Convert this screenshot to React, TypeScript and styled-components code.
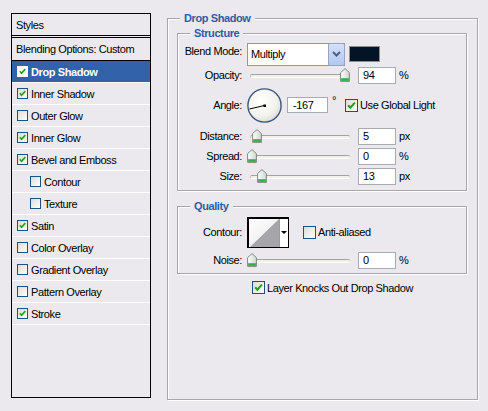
import { createGlobalStyle, styled } from "styled-components";

const GlobalStyle = createGlobalStyle`
  html, body {
    margin: 0;
    background: #ebe9ed;
    font-family: "Liberation Sans", Arial, sans-serif;
    font-size: 11px;
    letter-spacing: -0.4px;
    color: #000;
  }
`;

const Page = styled.div`
  width: 488px;
  height: 411px;
  box-sizing: border-box;
  padding: 12px 0 0 11px;
  display: flex;
  align-items: flex-start;
  gap: 16px;
  overflow: hidden;
`;

/* ---------- left list ---------- */

const StylesPanel = styled.div`
  margin-top: 1px;
  width: 140px;
  height: 385px;
  box-sizing: border-box;
  border: 1px solid #000;
  display: flex;
  flex-direction: column;
`;

const PanelHeader = styled.div`
  height: 24px;
  box-sizing: border-box;
  border-bottom: 3px double #000;
  padding-left: 4px;
  display: flex;
  align-items: center;
`;

const BlendingRow = styled.div`
  height: 23px;
  box-sizing: border-box;
  border-bottom: 1px solid #000;
  padding-left: 4px;
  display: flex;
  align-items: center;
`;

const StyleRow = styled.div<{ $selected?: boolean; $indent?: boolean }>`
  height: 22px;
  box-sizing: border-box;
  border-bottom: 1px solid #fff;
  padding-left: ${(p) => (p.$indent ? 18 : 5)}px;
  display: flex;
  align-items: center;
  gap: 3px;
  background: ${(p) => (p.$selected ? "#3162aa" : "transparent")};
  color: ${(p) => (p.$selected ? "#fff" : "#000")};
  font-weight: ${(p) => (p.$selected ? "bold" : "normal")};
`;

/* ---------- checkbox ---------- */

const Box = styled.span<{ $size: number; $light?: boolean }>`
  width: ${(p) => p.$size}px;
  height: ${(p) => p.$size}px;
  box-sizing: border-box;
  flex-shrink: 0;
  border: 1px solid ${(p) => (p.$light ? "#fff" : "#1c5180")};
  background: ${(p) =>
    p.$light ? "#fff" : "linear-gradient(135deg, #dcdcd7 0%, #f4f4f0 70%, #fff 100%)"};
  display: flex;
  align-items: center;
  justify-content: center;
`;

function Check({
  checked,
  size = 13,
  light,
}: {
  checked?: boolean;
  size?: number;
  light?: boolean;
}) {
  const s = size - 2;
  return (
    <Box $size={size} $light={light}>
      {checked && (
        <svg width={s} height={s} viewBox="0 0 11 11">
          <path
            d="M2.2 5.2 L4.3 7.6 L8.9 2.6"
            fill="none"
            stroke="#21a121"
            strokeWidth="2.1"
          />
        </svg>
      )}
    </Box>
  );
}

/* ---------- group boxes ---------- */

const Group = styled.fieldset`
  margin: 0;
  min-inline-size: 0;
  box-sizing: border-box;
  border: 1px solid #a7a6ab;
  box-shadow: 1px 1px 0 #fff, inset 1px 1px 0 #fff;
  padding: 0 10px 0 9px;
`;

const OuterGroup = styled(Group)`
  width: 311px;
  height: 388px;
  padding-top: 2px;
`;

const InnerGroup = styled(Group)<{ $top?: number; $bottom: number; $pt: number }>`
  margin-top: ${(p) => p.$top ?? 0}px;
  padding: ${(p) => p.$pt}px 0 ${(p) => p.$bottom}px 0;
`;

const Legend = styled.legend<{ $indent?: number }>`
  margin-left: ${(p) => p.$indent ?? 3}px;
  padding: 0 4px;
  line-height: 13px;
  font-weight: bold;
  color: #2d5ca6;
  background: #ebe9ed;
`;

/* ---------- rows and controls ---------- */

const Row = styled.div<{ $h: number; $mt?: number }>`
  height: ${(p) => p.$h}px;
  margin-top: ${(p) => p.$mt ?? 0}px;
  display: flex;
  align-items: center;
`;

const Label = styled.span<{ $raise?: number }>`
  width: 64px;
  flex-shrink: 0;
  margin-right: 5px;
  text-align: right;
  white-space: nowrap;
  padding-bottom: ${(p) => p.$raise ?? 0}px;
`;

const Select = styled.div`
  width: 98px;
  height: 23px;
  box-sizing: border-box;
  border: 1px solid #7f9db9;
  background: #fff;
  display: flex;
  align-items: stretch;
`;

const SelectValue = styled.span`
  flex: 1;
  padding-left: 3px;
  display: flex;
  align-items: center;
`;

const DropButton = styled.span`
  width: 17px;
  box-sizing: border-box;
  margin: -1px -1px -1px 0;
  border: 1px solid #98a4bc;
  border-radius: 2px;
  background: linear-gradient(180deg, #d6e1fa 0%, #c0d1f5 60%, #b3c7ef 100%);
  display: flex;
  align-items: center;
  justify-content: center;
`;

const Swatch = styled.span`
  width: 31px;
  height: 16px;
  box-sizing: border-box;
  margin-left: 4px;
  border: 1px solid #8e8e8e;
  background: #021426;
`;

const SliderBox = styled.div`
  position: relative;
  width: 105px;
  height: 14px;
  flex-shrink: 0;
`;

const Track = styled.div`
  position: absolute;
  left: 3px;
  right: 2px;
  top: 6px;
  height: 4px;
  box-sizing: border-box;
  border-top: 1px solid #a3a39b;
  border-left: 1px solid #c2c2ba;
  border-bottom: 1px solid #fff;
  border-radius: 2px;
  background: #f1f1ea;
`;

const Thumb = styled.svg`
  position: absolute;
  top: 0;
`;

function Slider({ pos }: { pos: number }) {
  return (
    <SliderBox>
      <Track />
      <Thumb width="10" height="14" viewBox="0 0 10 14" style={{ left: pos * 99 }}>
        <defs>
          <linearGradient id="thumbFill" x1="0" y1="0" x2="1" y2="0">
            <stop offset="0" stopColor="#ffffff" />
            <stop offset="1" stopColor="#cfd6cf" />
          </linearGradient>
        </defs>
        <path
          d="M5 0.6 L9.4 4.6 L9.4 13.4 L0.6 13.4 L0.6 4.6 Z"
          fill="url(#thumbFill)"
          stroke="#7b8a80"
        />
        <rect x="1.1" y="10.2" width="7.8" height="2.7" fill="#2fb33f" />
      </Thumb>
    </SliderBox>
  );
}

const NumberField = styled.input<{ $w?: number; $h?: number; $pad?: number }>`
  width: ${(p) => p.$w ?? 38}px;
  height: ${(p) => p.$h ?? 17}px;
  box-sizing: border-box;
  margin: 0;
  flex-shrink: 0;
  border: 1px solid #a5acb2;
  background: #fff;
  padding: 0 0 0 ${(p) => p.$pad ?? 4}px;
  font: inherit;
  letter-spacing: inherit;
  color: #000;
  outline: none;
`;

const Unit = styled.span`
  margin-left: 3px;
`;

const Dial = styled.svg`
  flex-shrink: 0;
`;

const Degree = styled.span`
  width: 13px;
  margin-left: 4px;
  align-self: flex-start;
  padding-top: 10px;
`;

const CheckLabel = styled.label<{ $gap?: number }>`
  display: flex;
  align-items: center;
  gap: ${(p) => p.$gap ?? 2}px;
  white-space: nowrap;
`;

const ContourPicker = styled.div`
  width: 42px;
  height: 31px;
  box-sizing: border-box;
  border: 1px solid #000;
  border-top-width: 2px;
  border-left-width: 2px;
  background: #fff;
  display: flex;
`;

const ContourArrow = styled.span`
  flex: 1;
  border-left: 1px solid #9c9ca0;
  display: flex;
  align-items: center;
  justify-content: center;
  &::after {
    content: "";
    border-left: 3px solid transparent;
    border-right: 3px solid transparent;
    border-top: 3px solid #000;
  }
`;

const Spacer = styled.span<{ $w: number }>`
  width: ${(p) => p.$w}px;
  flex-shrink: 0;
`;

const KnockRow = styled.div`
  margin-top: 6px;
  height: 15px;
  padding-left: 75px;
  display: flex;
  align-items: center;
`;

const styleItems = [
  { name: "Drop Shadow", checked: true, selected: true },
  { name: "Inner Shadow", checked: true },
  { name: "Outer Glow", checked: false },
  { name: "Inner Glow", checked: true },
  { name: "Bevel and Emboss", checked: true },
  { name: "Contour", checked: false, indent: true },
  { name: "Texture", checked: false, indent: true },
  { name: "Satin", checked: true },
  { name: "Color Overlay", checked: false },
  { name: "Gradient Overlay", checked: false },
  { name: "Pattern Overlay", checked: false },
  { name: "Stroke", checked: true },
];

export default function App() {
  const angle = (-167 * Math.PI) / 180;
  const lx = 17.5 + 15.5 * Math.cos(angle);
  const ly = 17.5 - 15.5 * Math.sin(angle);

  return (
    <Page>
      <GlobalStyle />
      <StylesPanel>
        <PanelHeader>Styles</PanelHeader>
        <BlendingRow>Blending Options: Custom</BlendingRow>
        {styleItems.map((item) => (
          <StyleRow key={item.name} $selected={item.selected} $indent={item.indent}>
            <Check checked={item.checked} size={11} light={item.selected} />
            {item.name}
          </StyleRow>
        ))}
      </StylesPanel>

      <OuterGroup>
        <Legend>Drop Shadow</Legend>

        <InnerGroup $pt={2} $bottom={4}>
          <Legend $indent={12}>Structure</Legend>

          <Row $h={24}>
            <Label $raise={6}>Blend Mode:</Label>
            <Select>
              <SelectValue>Multiply</SelectValue>
              <DropButton>
                <svg width="9" height="6" viewBox="0 0 9 6">
                  <path d="M1 1 L4.5 4.5 L8 1" fill="none" stroke="#4d6185" strokeWidth="2" />
                </svg>
              </DropButton>
            </Select>
            <Swatch />
          </Row>

          <Row $h={18}>
            <Label>Opacity:</Label>
            <Slider pos={0.94} />
            <Spacer $w={6} />
            <NumberField readOnly value="94" />
            <Unit>%</Unit>
          </Row>

          <Row $h={42}>
            <Label>Angle:</Label>
            <Dial width="35" height="35" viewBox="0 0 35 35">
              <defs>
                <radialGradient id="dialFill" cx="0.4" cy="0.35" r="0.7">
                  <stop offset="0" stopColor="#ffffff" />
                  <stop offset="0.7" stopColor="#f1f1ec" />
                  <stop offset="1" stopColor="#d9d9d2" />
                </radialGradient>
              </defs>
              <circle cx="17.5" cy="17.5" r="16.6" fill="url(#dialFill)" stroke="#3d5480" strokeWidth="1.4" />
              <line x1="17.5" y1="17.5" x2={lx} y2={ly} stroke="#000" strokeWidth="1" />
              <rect x="16.5" y="16.5" width="2.5" height="2.5" fill="#000" />
            </Dial>
            <Spacer $w={5} />
            <NumberField readOnly value="-167" $w={41} $h={16} $pad={5} />
            <Degree>°</Degree>
            <CheckLabel>
              <Check checked />
              Use Global Light
            </CheckLabel>
          </Row>

          <Row $h={20}>
            <Label>Distance:</Label>
            <Slider pos={0.05} />
            <Spacer $w={6} />
            <NumberField readOnly value="5" />
            <Unit>px</Unit>
          </Row>

          <Row $h={20}>
            <Label>Spread:</Label>
            <Slider pos={0} />
            <Spacer $w={6} />
            <NumberField readOnly value="0" />
            <Unit>%</Unit>
          </Row>

          <Row $h={20}>
            <Label>Size:</Label>
            <Slider pos={0.1} />
            <Spacer $w={6} />
            <NumberField readOnly value="13" />
            <Unit>px</Unit>
          </Row>
        </InnerGroup>

        <InnerGroup $top={9} $pt={3} $bottom={3}>
          <Legend $indent={12}>Quality</Legend>

          <Row $h={32}>
            <Label>Contour:</Label>
            <ContourPicker>
              <svg width="30" height="28" viewBox="0 0 30 28">
                <defs>
                  <linearGradient id="contourBg" x1="0" y1="0" x2="1" y2="1">
                    <stop offset="0" stopColor="#ffffff" />
                    <stop offset="1" stopColor="#e6e6e6" />
                  </linearGradient>
                </defs>
                <rect width="30" height="28" fill="url(#contourBg)" />
                <polygon points="1,28 30,0 30,28" fill="#a6a6aa" />
              </svg>
              <ContourArrow />
            </ContourPicker>
            <Spacer $w={14} />
            <CheckLabel>
              <Check />
              Anti-aliased
            </CheckLabel>
          </Row>

          <Row $h={20} $mt={2}>
            <Label>Noise:</Label>
            <Slider pos={0} />
            <Spacer $w={6} />
            <NumberField readOnly value="0" />
            <Unit>%</Unit>
          </Row>
        </InnerGroup>

        <KnockRow>
          <CheckLabel>
            <Check checked />
            Layer Knocks Out Drop Shadow
          </CheckLabel>
        </KnockRow>
      </OuterGroup>
    </Page>
  );
}
